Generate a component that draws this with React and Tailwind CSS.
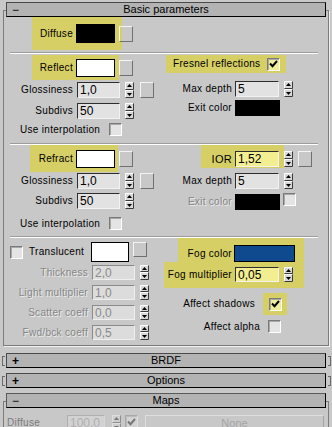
import React from 'react';

const YEL = 'bg-[#d6cf66]';

function Lbl({ children, className = '', dim, left }) {
  return (
    <span
      className={`shrink-0 text-[10px] tracking-[0.3px] leading-none whitespace-nowrap ${left ? 'text-left' : 'text-right'} ${
        dim ? 'text-[#868686] [text-shadow:1px_1px_0_#ececec]' : 'text-black'
      } ${className}`}
    >
      {children}
    </span>
  );
}

function Field({ value, w = 'w-[43px]', h = 'h-[16px]', tone = 'bg-[#e2e2e2]', dim }) {
  return (
    <div
      className={`${w} ${h} shrink-0 border flex items-center pl-[2px] text-[12px] leading-none ${tone} ${
        dim
          ? 'border-t-[#8a8a8a] border-l-[#8a8a8a] border-b-[#efefef] border-r-[#efefef] text-[#8a8a8a]'
          : 'border-t-[#2e2e2e] border-l-[#2e2e2e] border-b-[#f2f2f2] border-r-[#f2f2f2] text-black'
      }`}
    >
      {value}
    </div>
  );
}

function Spinner({ h = 16, className = '' }) {
  const mid = Math.floor(h / 2);
  return (
    <svg width="9" height={h} viewBox={`0 0 9 ${h}`} className={`shrink-0 ${className}`}>
      <rect x="0" y="0" width="9" height={h} fill="#d8d8d8" />
      <path d={`M0.5 ${mid - 1} V0.5 H8`} stroke="#fff" fill="none" />
      <path d={`M8.5 0.5 V${mid - 0.5} H0.5`} stroke="#3a3a3a" fill="none" />
      <path d={`M0.5 ${h - 1} V${mid + 0.5} H8`} stroke="#fff" fill="none" />
      <path d={`M8.5 ${mid + 0.5} V${h - 0.5} H0.5`} stroke="#3a3a3a" fill="none" />
      <path d={`M4.5 2 L7 5 H2 Z`} fill="#000" />
      <path d={`M2 ${mid + 3} H7 L4.5 ${mid + 6} Z`} fill="#000" />
    </svg>
  );
}

function MapBtn({ className = '', h = 'h-[16px]' }) {
  return (
    <div
      className={`w-[14px] ${h} shrink-0 border border-t-[#f4f4f4] border-l-[#f4f4f4] border-b-[#707070] border-r-[#707070] ${className}`}
    />
  );
}

function Check({ checked, tone = 'bg-[#e4e4e4]', className = '' }) {
  return (
    <div
      className={`w-[13px] h-[13px] shrink-0 border border-t-[#7a7a7a] border-l-[#7a7a7a] border-b-white border-r-white shadow-[inset_1px_1px_0_#a8a8a8] flex items-center justify-center ${tone} ${className}`}
    >
      {checked && (
        <svg width="9" height="8" viewBox="0 0 9 8">
          <path d="M1 3.5 L3.5 6.2 L8 1" stroke="#000" strokeWidth="2" fill="none" />
        </svg>
      )}
    </div>
  );
}

function Swatch({ className = '' }) {
  return <div className={`shrink-0 border border-black ${className}`} />;
}

function Sep() {
  return <div className="ml-[6px] w-[308px] h-[2px] border-t border-[#9c9c9c] bg-white" />;
}

function Bar({ sign, title, bold, className = '' }) {
  return (
    <div
      className={`h-[15px] w-[320px] shrink-0 bg-[#b3b3b3] border border-t-[#4a4a4a] border-l-[#4a4a4a] border-b-black border-r-black flex items-center ${className}`}
    >
      <span className={`w-[18px] pl-[5px] text-[12px] leading-none ${bold ? 'font-bold' : ''}`}>{sign}</span>
      <span className="flex-1 -ml-[18px] text-center text-[11px] leading-none">{title}</span>
    </div>
  );
}

function Closed({ title, className = '' }) {
  return (
    <div className={`flex items-center h-[15px] ${className}`}>
      <div className="ml-[2px] w-[3px] h-[10px] border-l border-t border-b border-[#6a6a6a]" />
      <Bar sign="+" bold title={title} className="ml-[1px]" />
      <div className="ml-[2px] w-[3px] h-[10px] border-r border-t border-b border-[#6a6a6a]" />
    </div>
  );
}

export default function App() {
  return (
    <div className="w-[332px] h-[427px] overflow-hidden bg-[#c8c8c8] font-['Liberation_Sans',Arial,sans-serif] text-black select-none">
      <div className="pt-[10px]">
        {/* Basic parameters rollout */}
        <div className="ml-[3px] w-[326px] border border-[#7c7c7c] shadow-[1px_1px_0_#f0f0f0]">
          <Bar sign="−" title="Basic parameters" className="-mt-[9px] mx-[2px]" />

          {/* Diffuse */}
          <div className="h-[35px] flex items-start">
            <div className={`ml-[28px] w-[90px] h-[33px] ${YEL} flex items-center`}>
              <Lbl className="w-[44px] pr-[3px]">Diffuse</Lbl>
              <Swatch className="w-[39px] h-[19px] bg-black" />
            </div>
            <MapBtn className="-ml-[3px] mt-[9px]" />
          </div>
          <Sep />

          {/* Reflection */}
          <div className="h-[89px] flex">
            <div className="w-[160px] flex flex-col">
              <div className="mt-[1px] flex items-center">
                <div className={`ml-[28px] w-[87px] h-[25px] ${YEL} flex items-center`}>
                  <Lbl className="w-[44px] pr-[3px]">Reflect</Lbl>
                  <Swatch className="w-[39px] h-[18px] bg-white" />
                </div>
                <MapBtn />
              </div>
              <div className="mt-[2px] flex items-center h-[16px]">
                <Lbl className="w-[73px] pr-[4px]">Glossiness</Lbl>
                <Field value="1,0" />
                <Spinner className="ml-[5px]" />
                <MapBtn className="ml-[6px]" />
              </div>
              <div className="mt-[5px] flex items-center h-[16px]">
                <Lbl className="w-[73px] pr-[4px]">Subdivs</Lbl>
                <Field value="50" />
                <Spinner className="ml-[5px]" />
              </div>
              <div className="mt-[4px] flex items-center">
                <Lbl left className="ml-[16px] w-[89px]">Use interpolation</Lbl>
                <Check />
              </div>
            </div>
            <div className="flex-1 flex flex-col">
              <div className={`mt-[1px] ml-[2px] w-[120px] h-[18px] ${YEL} flex items-center justify-between pl-[7px] pr-[6px]`}>
                <Lbl>Fresnel reflections</Lbl>
                <Check checked tone="bg-[#f1ec9a]" />
              </div>
              <div className="mt-[8px] flex items-center h-[16px]">
                <Lbl className="w-[71px] pr-[3px]">Max depth</Lbl>
                <Field value="5" w="w-[44px]" />
                <Spinner className="ml-[5px]" />
              </div>
              <div className="mt-[3px] flex items-center">
                <Lbl className="w-[71px] pr-[3px]">Exit color</Lbl>
                <Swatch className="w-[45px] h-[16px] bg-black" />
              </div>
            </div>
          </div>
          <Sep />

          {/* Refraction */}
          <div className="h-[91px] flex">
            <div className="w-[160px] flex flex-col">
              <div className="flex items-center">
                <div className={`ml-[26px] w-[88px] h-[27px] ${YEL} flex items-center`}>
                  <Lbl className="w-[46px] pr-[3px]">Refract</Lbl>
                  <Swatch className="w-[39px] h-[18px] bg-white" />
                </div>
                <MapBtn className="ml-[1px]" />
              </div>
              <div className="mt-[1px] flex items-center h-[16px]">
                <Lbl className="w-[73px] pr-[4px]">Glossiness</Lbl>
                <Field value="1,0" />
                <Spinner className="ml-[5px]" />
                <MapBtn className="ml-[6px]" />
              </div>
              <div className="mt-[4px] flex items-center h-[16px]">
                <Lbl className="w-[73px] pr-[4px]">Subdivs</Lbl>
                <Field value="50" />
                <Spinner className="ml-[5px]" />
              </div>
              <div className="mt-[8px] flex items-center">
                <Lbl left className="ml-[16px] w-[89px]">Use interpolation</Lbl>
                <Check />
              </div>
            </div>
            <div className="flex-1 flex flex-col">
              <div className="flex items-start">
                <div className={`ml-[37px] w-[83px] h-[23px] ${YEL} flex items-center pt-[6px] pb-[1px]`}>
                  <Lbl className="w-[34px] pr-[3px] text-[11px]">IOR</Lbl>
                  <Field value="1,52" w="w-[44px]" tone="bg-[#f3ee92]" />
                </div>
                <Spinner className="mt-[6px]" />
                <MapBtn className="ml-[5px] mt-[6px]" />
              </div>
              <div className="mt-[5px] flex items-center h-[16px]">
                <Lbl className="w-[71px] pr-[3px]">Max depth</Lbl>
                <Field value="5" w="w-[44px]" />
                <Spinner className="ml-[5px]" />
              </div>
              <div className="mt-[5px] flex items-start">
                <Lbl dim className="w-[71px] pr-[3px] mt-[3px]">Exit color</Lbl>
                <Swatch className="w-[45px] h-[16px] bg-black" />
                <Check className="ml-[3px] -mt-[1px]" />
              </div>
            </div>
          </div>
          <Sep />

          {/* Translucency / fog */}
          <div className="h-[107px] flex">
            <div className="w-[160px] flex flex-col">
              <div className="mt-[4px] flex items-center">
                <Check className="ml-[6px]" />
                <Lbl left className="ml-[6px] w-[62px]">Translucent</Lbl>
                <Swatch className="w-[38px] h-[20px] bg-white" />
                <MapBtn className="ml-[4px] self-start" h="h-[15px]" />
              </div>
              {[
                ['Thickness', '2,0', 'mt-[3px]'],
                ['Light multiplier', '1,0', 'mt-[5px]'],
                ['Scatter coeff', '0,0', 'mt-[5px]'],
                ['Fwd/bck coeff', '0,5', 'mt-[5px]'],
              ].map(([l, v, m]) => (
                <div key={l} className={`${m} flex items-center h-[15px]`}>
                  <Lbl dim className="w-[88px] pr-[4px]">{l}</Lbl>
                  <Field value={v} h="h-[15px]" dim tone="bg-[#dcdcdc]" />
                  <Spinner h={15} className="ml-[5px]" />
                </div>
              ))}
            </div>
            <div className="flex-1 flex flex-col">
              <div className={`ml-[14px] w-[126px] h-[24px] ${YEL} flex items-center pt-[7px]`}>
                <Lbl className="w-[56px] pr-[2px]">Fog color</Lbl>
                <Swatch className="w-[61px] h-[17px] bg-[#0f4a8e]" />
              </div>
              <div className={`w-[140px] h-[26px] ${YEL} flex items-start pt-[5px]`}>
                <Lbl className="w-[71px] pr-[3px] mt-[3px]">Fog multiplier</Lbl>
                <Field value="0,05" w="w-[44px]" h="h-[15px]" tone="bg-[#f3ee92]" />
                <Spinner h={15} className="ml-[5px]" />
              </div>
              <div className="mt-[5px] flex items-center">
                <Lbl className="w-[99px] pr-[8px]">Affect shadows</Lbl>
                <div className={`w-[24px] h-[22px] ${YEL} flex items-center justify-center`}>
                  <Check checked tone="bg-[#f1ec9a]" />
                </div>
              </div>
              <div className="mt-[5px] flex items-center">
                <Lbl className="w-[104px] pr-[8px]">Affect alpha</Lbl>
                <Check />
              </div>
            </div>
          </div>
        </div>

        {/* collapsed rollouts */}
        <Closed title="BRDF" className="mt-[7px]" />
        <Closed title="Options" className="mt-[5px]" />

        {/* Maps rollout */}
        <div className="mt-[13px] ml-[3px] w-[326px] h-[40px] border-t border-l border-r border-[#7c7c7c]">
          <Bar sign="−" title="Maps" className="-mt-[9px] mx-[2px] border-t-[#5a5a5a] border-l-[#5a5a5a] border-b-[#3a3a3a] border-r-[#3a3a3a]" />
          <div className="mt-[7px] flex items-start opacity-40">
            <Lbl left className="ml-[3px] w-[60px] mt-[3px]">Diffuse</Lbl>
            <Field value="100,0" w="w-[38px]" dim />
            <Spinner className="ml-[7px]" />
            <Check checked className="ml-[4px]" />
            <div className="ml-[7px] w-[179px] h-[16px] border border-t-white border-l-white border-b-[#707070] border-r-[#707070] flex items-center justify-center text-[11px] text-[#707070]">
              None
            </div>
          </div>
        </div>
      </div>
    </div>
  );
}
